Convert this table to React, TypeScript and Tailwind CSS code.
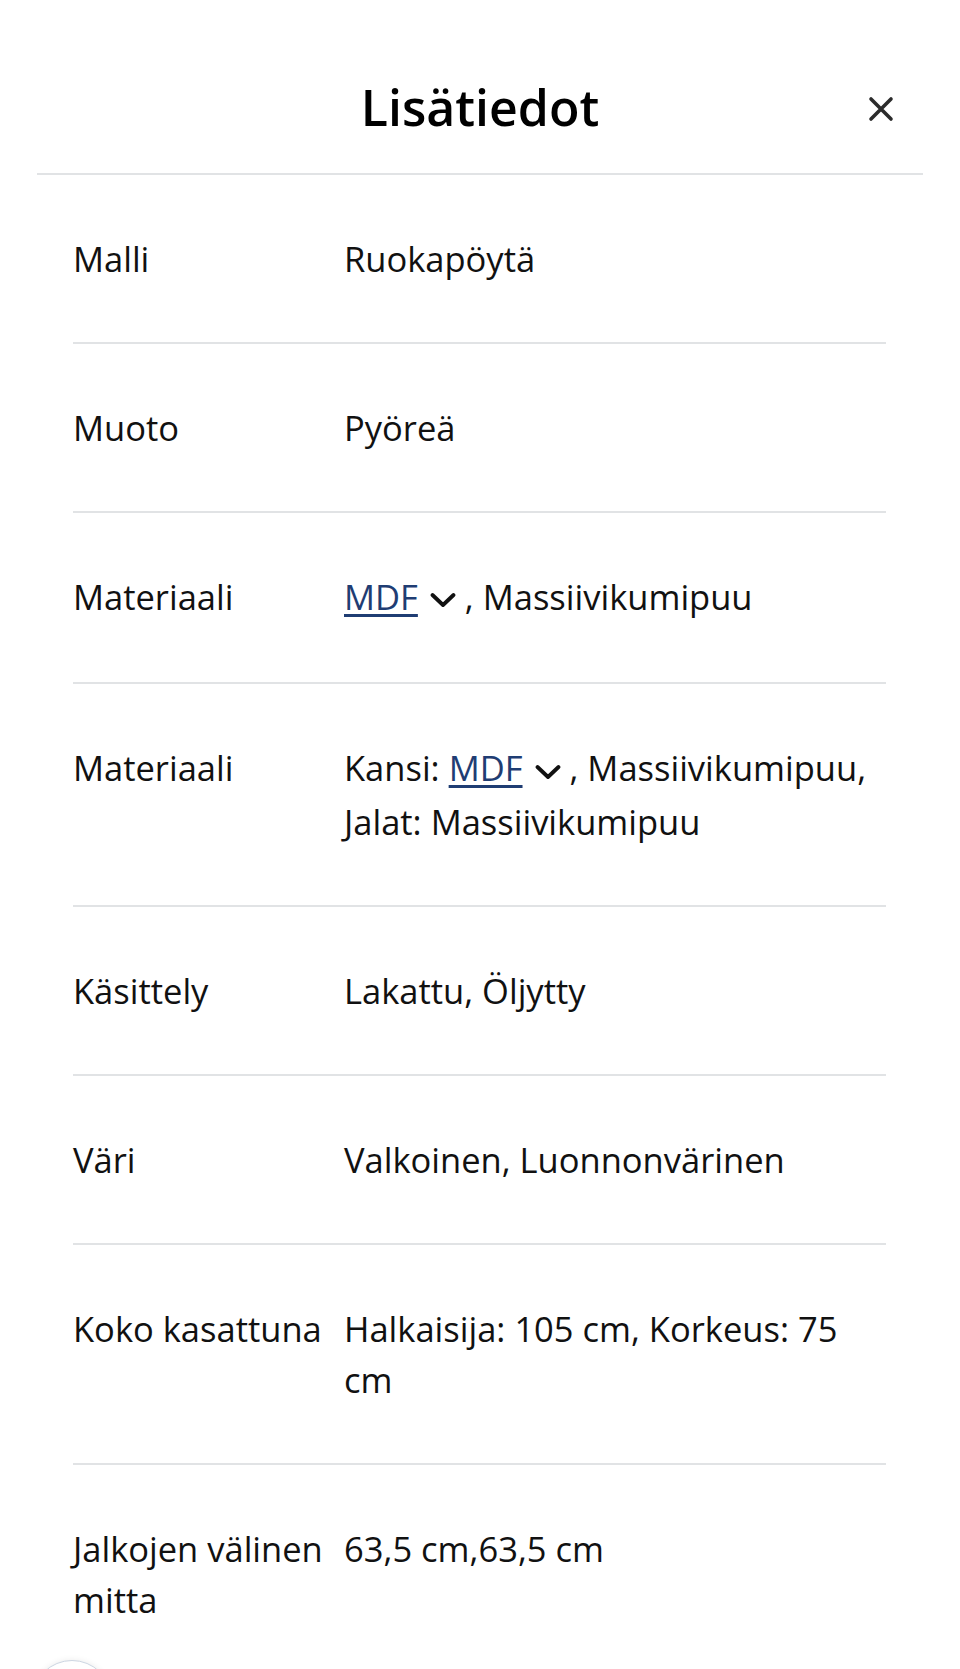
import { ReactNode } from "react";

type Row = {
  label: string;
  value: ReactNode;
};

function Chevron() {
  // korkea laatikko kasvattaa rivin korkeutta kuten alkuperäisessä
  return (
    <svg
      className="inline-block align-middle ml-[12px]"
      width="26"
      height="47"
      viewBox="0 0 26 47"
      fill="none"
    >
      <path
        d="M2.5 18l10.5 10 10.5-10"
        stroke="#111"
        strokeWidth="3.8"
        strokeLinecap="round"
        strokeLinejoin="round"
      />
    </svg>
  );
}

function MdfLink() {
  return (
    <>
      <a
        href="#"
        className="text-[#1f3d73] underline decoration-[3px] underline-offset-[4px]"
      >
        MDF
      </a>
      <Chevron />
    </>
  );
}

const rows: Row[] = [
  { label: "Malli", value: "Ruokapöytä" },
  { label: "Muoto", value: "Pyöreä" },
  {
    label: "Materiaali",
    value: (
      <>
        <MdfLink /> , Massiivikumipuu
      </>
    ),
  },
  {
    label: "Materiaali",
    value: (
      <>
        Kansi: <MdfLink /> , Massiivikumipuu, Jalat: Massiivikumipuu
      </>
    ),
  },
  { label: "Käsittely", value: "Lakattu, Öljytty" },
  { label: "Väri", value: "Valkoinen, Luonnonvärinen" },
  { label: "Koko kasattuna", value: "Halkaisija: 105 cm, Korkeus: 75 cm" },
  { label: "Jalkojen välinen mitta", value: "63,5 cm,63,5 cm" },
];

export default function App() {
  return (
    <div
      className="relative h-[1669px] w-full overflow-hidden bg-white text-[#111]"
      style={{ fontFamily: '"Open Sans", "Noto Sans", sans-serif' }}
    >
      {/* otsikko */}
      <div className="mx-[37px] grid h-[175px] grid-cols-[1fr_auto_1fr] items-center border-b-2 border-[#e1e3e5] pt-[40px]">
        <div />
        <h2 className="text-[50px] font-semibold leading-none text-black">
          Lisätiedot
        </h2>
        <div className="flex justify-end pr-[29px] pt-[4px]">
          <button aria-label="Sulje" className="flex h-[26px] w-[26px] items-center justify-center">
            <svg width="26" height="26" viewBox="0 0 26 26" fill="none">
              <path
                d="M3 3l20 20M23 3L3 23"
                stroke="#2b2b2b"
                strokeWidth="3.6"
                strokeLinecap="round"
              />
            </svg>
          </button>
        </div>
      </div>

      {/* tiedot */}
      <div className="ml-[73px] mr-[74px]">
        {rows.map((row, i) => (
          <div
            key={i}
            className={`grid grid-cols-[271px_1fr] py-[58px] text-[34.5px] leading-[51px] ${
              i < rows.length - 1 ? "border-b-2 border-[#e1e3e5]" : ""
            }`}
          >
            <div className="pr-[20px]">{row.label}</div>
            <div>{row.value}</div>
          </div>
        ))}
      </div>

      <div className="absolute left-[32px] top-[1660px] h-[80px] w-[80px] rounded-full border border-[#cdd6e2] bg-white shadow-[0_0_6px_rgba(0,0,0,0.08)]" />
    </div>
  );
}
